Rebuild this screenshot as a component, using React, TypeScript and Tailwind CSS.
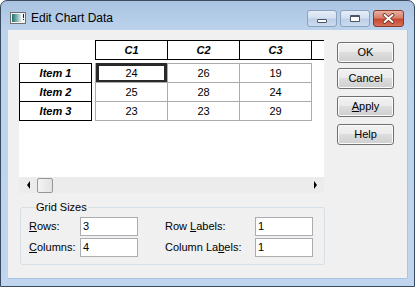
import React from 'react';

const ui: React.CSSProperties = { fontFamily: '"Liberation Sans", Arial, sans-serif' };

const DialogButton = ({ children, className = '' }: { children: React.ReactNode; className?: string }) => (
  <div
    className={`flex h-[21px] w-[57px] items-center justify-center rounded-[3px] border border-[#707070] bg-[linear-gradient(#f2f2f2,#ebebeb_45%,#dddddd_50%,#cfcfcf)] text-[11px] leading-none text-black shadow-[inset_0_0_0_1px_#fbfbfb] ${className}`}
  >
    {children}
  </div>
);

const TextBox = ({ value }: { value: string }) => (
  <div className="flex h-[19px] w-[58px] items-center border border-[#abadb3] bg-white pl-[2px] text-[11px] text-black">
    {value}
  </div>
);

const HeaderCell = ({ label, first }: { label?: string; first?: boolean }) => (
  <div
    className={`flex h-[20px] w-[73px] shrink-0 items-center justify-center border border-black text-[11px] font-bold italic ${first ? '' : '-ml-px'}`}
  >
    {label}
  </div>
);

const rows = [
  { name: 'Item 1', values: ['24', '26', '19'] },
  { name: 'Item 2', values: ['25', '28', '24'] },
  { name: 'Item 3', values: ['23', '23', '29'] },
];

const Caption = ({ kind }: { kind: 'min' | 'max' | 'close' }) => {
  if (kind === 'close') {
    return (
      <div className="ml-[3px] flex h-[17px] w-[31px] items-center justify-center rounded-[3px] border border-[#8a3b2c] bg-[linear-gradient(#eab0a2,#d8806b_45%,#c7492f_55%,#d6715a)]">
        <svg width="13" height="11" viewBox="0 0 13 11">
          <path d="M2.5 2 L10.5 9 M10.5 2 L2.5 9" stroke="#6b2a1e" strokeWidth="3.6" strokeLinecap="round" />
          <path d="M2.5 2 L10.5 9 M10.5 2 L2.5 9" stroke="#ffffff" strokeWidth="2" strokeLinecap="round" />
        </svg>
      </div>
    );
  }
  return (
    <div
      className={`flex h-[17px] w-[30px] items-center justify-center rounded-[3px] border border-[#8ca2bd] bg-[linear-gradient(#e6eef8,#d3e0f0_45%,#bccfe7_55%,#cbdcef)] ${kind === 'max' ? 'ml-[3px]' : ''}`}
    >
      {kind === 'min' ? (
        <div className="mt-[4px] h-[4px] w-[10px] rounded-[1px] border border-[#4a5566] bg-white" />
      ) : (
        <div className="h-[7px] w-[10px] rounded-[1px] border border-[#4a5566] border-t-2 bg-white" />
      )}
    </div>
  );
};

export default function App() {
  return (
    <div style={ui} className="h-[287px] w-[415px] overflow-hidden bg-white">
      <div className="flex h-[287px] w-[415px] flex-col rounded-t-[7px] border border-[#3a4a5e] bg-[linear-gradient(#a9c3e1,#bcd3ed_30px,#c0d6ee)]">
        {/* title bar */}
        <div className="flex h-[29px] items-start pl-[9px] pt-[9px] pr-[10px]">
          <svg width="16" height="12" viewBox="0 0 16 12" className="mt-[2px]">
            <defs>
              <linearGradient id="ico" x1="0" y1="0" x2="1" y2="0">
                <stop offset="0" stopColor="#1f6f6c" />
                <stop offset="1" stopColor="#d8ece9" />
              </linearGradient>
            </defs>
            <rect x="0.5" y="0.5" width="15" height="11" fill="#f4f4f4" stroke="#707070" />
            <rect x="2" y="2" width="9" height="8" fill="url(#ico)" />
            <rect x="13" y="2" width="1" height="4" fill="#222" />
            <rect x="13" y="7" width="1" height="1" fill="#222" />
          </svg>
          <div className="ml-[5px] text-[12px] leading-[16px] text-black">Edit Chart Data</div>
          <div className="ml-auto flex">
            <Caption kind="min" />
            <Caption kind="max" />
            <Caption kind="close" />
          </div>
        </div>

        {/* client area */}
        <div className="ml-[7px] flex h-[248px] w-[399px] bg-[#f0f0f0] pl-[11px] pt-[10px] text-[11px] text-black shadow-[1px_0_0_#a5c4e6,0_1px_0_#a5c4e6]">
          <div className="flex w-[305px] flex-col">
            <div className="relative h-[137px] overflow-hidden bg-white">
              <div className="flex pl-[76px]">
                <HeaderCell label="C1" first />
                <HeaderCell label="C2" />
                <HeaderCell label="C3" />
                <HeaderCell />
              </div>
              <div className="mt-[3px] flex flex-col">
                {rows.map((r, i) => (
                  <div key={r.name} className={`flex ${i > 0 ? '-mt-px' : ''}`}>
                    <div className="flex h-[20px] w-[73px] shrink-0 items-center justify-center border border-black text-[11px] font-bold italic">
                      {r.name}
                    </div>
                    <div className="ml-[3px] flex">
                      {r.values.map((v, j) => (
                        <div
                          key={j}
                          className={`relative flex h-[20px] w-[73px] shrink-0 items-center justify-center border border-[#ababab] text-[11px] ${j > 0 ? '-ml-px' : ''}`}
                        >
                          {v}
                          {i === 0 && j === 0 && (
                            <div className="absolute inset-x-0 -inset-y-px border-[3px] border-[#2a2a2a]" />
                          )}
                        </div>
                      ))}
                    </div>
                  </div>
                ))}
              </div>
            </div>

            {/* horizontal scrollbar */}
            <div className="flex h-[16px] items-center bg-[#ececec]">
              <div className="flex h-full w-[18px] items-center justify-center">
                <div className="h-0 w-0 border-y-[4px] border-r-[3px] border-y-transparent border-r-black" />
              </div>
              <div className="h-[15px] w-[16px] rounded-[2px] border border-[#979797] bg-[linear-gradient(90deg,#f4f4f4,#e2e2e2)]" />
              <div className="flex-1" />
              <div className="flex h-full w-[18px] items-center justify-center">
                <div className="h-0 w-0 border-y-[4px] border-l-[3px] border-y-transparent border-l-black" />
              </div>
            </div>

            {/* group box */}
            <fieldset className="ml-px mt-[8px] w-[305px] rounded-[3px] border border-[#d5dfe5] pb-[7px] pl-[8px]">
              <legend className="ml-[6px] px-[1px] text-[11px] leading-[13px]">Grid Sizes</legend>
              <div className="mt-[3px] flex flex-col gap-[2px]">
                <div className="flex items-center">
                  <div className="w-[51px]">
                    <span className="underline underline-offset-1">R</span>ows:
                  </div>
                  <TextBox value="3" />
                  <div className="ml-[27px] w-[90px]">
                    Row <span className="underline underline-offset-1">L</span>abels:
                  </div>
                  <TextBox value="1" />
                </div>
                <div className="flex items-center">
                  <div className="w-[51px]">
                    <span className="underline underline-offset-1">C</span>olumns:
                  </div>
                  <TextBox value="4" />
                  <div className="ml-[27px] w-[90px]">
                    Column La<span className="underline underline-offset-1">b</span>els:
                  </div>
                  <TextBox value="1" />
                </div>
              </div>
            </fieldset>
          </div>

          {/* buttons */}
          <div className="ml-[13px] mt-[2px] flex flex-col">
            <DialogButton>OK</DialogButton>
            <DialogButton className="mt-[5px]">Cancel</DialogButton>
            <DialogButton className="mt-[7px]">
              <span>
                <span className="underline underline-offset-1">A</span>pply
              </span>
            </DialogButton>
            <DialogButton className="mt-[7px]">Help</DialogButton>
          </div>
        </div>

        {/* bottom frame */}
        <div className="flex-1" />
      </div>
    </div>
  );
}
